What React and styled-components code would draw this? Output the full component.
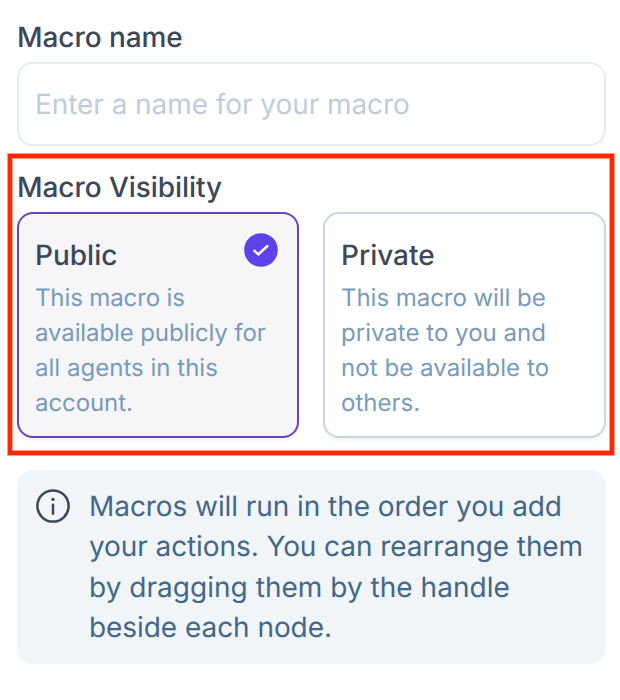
import React from "react";

import styled, { createGlobalStyle, css } from "styled-components";

const GlobalStyle = createGlobalStyle`
  * {
    box-sizing: border-box;
  }

  body {
    margin: 0;
    background: #ffffff;
    font-family: "Inter", sans-serif;
    text-rendering: geometricPrecision;
  }
`;

const Form = styled.form`
  width: 620px;
  height: 700px;
  padding: 17px 14px 0 17px;
`;

const heading = css`
  font-size: 28px;
  font-weight: 470;
  line-height: 40px;
  color: #3c4858;
`;

const Label = styled.label`
  ${heading};
  display: block;
  letter-spacing: -0.06px;
`;

const Input = styled.input`
  display: block;
  width: 100%;
  height: 84px;
  margin: 5px 0 21px;
  padding: 0 16px;
  appearance: none;
  border: 2px solid #e4ebf1;
  border-radius: 16px;
  font-family: inherit;
  font-size: 28px;
  letter-spacing: -0.06px;
  text-rendering: inherit;
  background: #ffffff;

  &::placeholder {
    color: #c1cddb;
    opacity: 1;
  }
`;

const Visibility = styled.section`
  position: relative;
  margin-bottom: 32px;

  &::after {
    content: "";
    position: absolute;
    top: -13px;
    left: -9px;
    right: -8px;
    bottom: -17px;
    border: 4px solid #ff2600;
    box-shadow: 0 0 0 1px rgba(255, 38, 0, 0.45),
      inset 0 0 0 1px rgba(255, 38, 0, 0.45);
    pointer-events: none;
  }
`;

const Options = styled.div`
  display: grid;
  grid-template-columns: 282px 283px;
  column-gap: 24px;
  margin-top: 5px;
`;

const Option = styled.button`
  display: flex;
  align-items: flex-start;
  justify-content: space-between;
  height: 226px;
  padding: 19px 16px 0;
  appearance: none;
  border: 2px solid ${props => (props.$active ? "#6844be" : "#c9d7e3")};
  border-radius: 16px;
  font-family: inherit;
  text-align: left;
  text-rendering: inherit;
  background: ${props => (props.$active ? "#f6f5f8" : "#ffffff")};
  box-shadow: 0 2px 4px rgba(0, 0, 0, 0.06);
`;

const OptionText = styled.div`
  width: 236px;
  margin: 2px -30px 0 0;
`;

const OptionTitle = styled.h4`
  ${heading};
  margin: 0 0 5px;
`;

const Description = styled.p`
  margin: 0;
  font-size: 24px;
  line-height: 35px;
  color: #779bbb;
`;

const CheckIcon = styled.svg`
  flex: none;
  width: 34px;
  height: 34px;
  margin: 0 3px 0 0;
`;

const Callout = styled.div`
  display: flex;
  height: 194px;
  padding: 16px 18px;
  border-radius: 16px;
  background: #f1f5f8;
`;

const InfoIcon = styled.svg`
  flex: none;
  width: 36px;
  height: 36px;
  margin: 2px 18px 0 0;
`;

const CalloutText = styled.p`
  margin: 0;
  font-size: 28px;
  line-height: 40.4px;
  color: #446888;
`;

const Line = styled.span`
  display: block;
  letter-spacing: ${props => props.$tracking}px;
  white-space: nowrap;
`;

const options = [
  {
    id: "public",
    title: "Public",
    lines: [
      ["This macro is", -0.12],
      ["available publicly for", -0.11],
      ["all agents in this", 0.02],
      ["account.", -0.08]
    ]
  },
  {
    id: "private",
    title: "Private",
    lines: [
      ["This macro will be", -0.04],
      ["private to you and", 0.02],
      ["not be available to", 0.06],
      ["others.", 0]
    ]
  }
];

const help = [
  ["Macros will run in the order you add", -0.07],
  ["your actions. You can rearrange them", -0.09],
  ["by dragging them by the handle", 0.03],
  ["beside each node.", -0.06]
];

const renderLine = ([text, tracking]) => (
  <Line key={text} $tracking={tracking}>
    {text}
  </Line>
);

export default class App extends React.Component {
  state = {
    name: "",
    visibility: "public"
  };

  render() {
    const { name, visibility } = this.state;

    return (
      <Form onSubmit={e => e.preventDefault()}>
        <GlobalStyle />
        <Label htmlFor="name">Macro name</Label>
        <Input
          id="name"
          type="text"
          placeholder="Enter a name for your macro"
          value={name}
          onChange={e => this.setState({ name: e.target.value })}
        />
        <Visibility>
          <Label as="div">Macro Visibility</Label>
          <Options>
            {options.map(option => (
              <Option
                key={option.id}
                type="button"
                $active={visibility === option.id}
                onClick={() => this.setState({ visibility: option.id })}
              >
                <OptionText>
                  <OptionTitle>{option.title}</OptionTitle>
                  <Description>{option.lines.map(renderLine)}</Description>
                </OptionText>
                {visibility === option.id && (
                  <CheckIcon viewBox="0 0 34 34" fill="none">
                    <circle cx="17" cy="17" r="16.8" fill="#5f41e8" />
                    <path
                      d="M10.4 17.7l3.8 3.8L23.4 13"
                      stroke="#ffffff"
                      strokeWidth="2.4"
                      strokeLinecap="round"
                      strokeLinejoin="round"
                    />
                  </CheckIcon>
                )}
              </Option>
            ))}
          </Options>
        </Visibility>
        <Callout>
          <InfoIcon viewBox="0 0 36 36" fill="none">
            <circle cx="18" cy="18" r="15.6" stroke="#3c4858" strokeWidth="2.5" />
            <circle cx="18" cy="11.4" r="1.7" fill="#3c4858" />
            <path
              d="M18 16.8v9"
              stroke="#3c4858"
              strokeWidth="2.5"
              strokeLinecap="round"
            />
          </InfoIcon>
          <CalloutText>{help.map(renderLine)}</CalloutText>
        </Callout>
      </Form>
    );
  }
}
